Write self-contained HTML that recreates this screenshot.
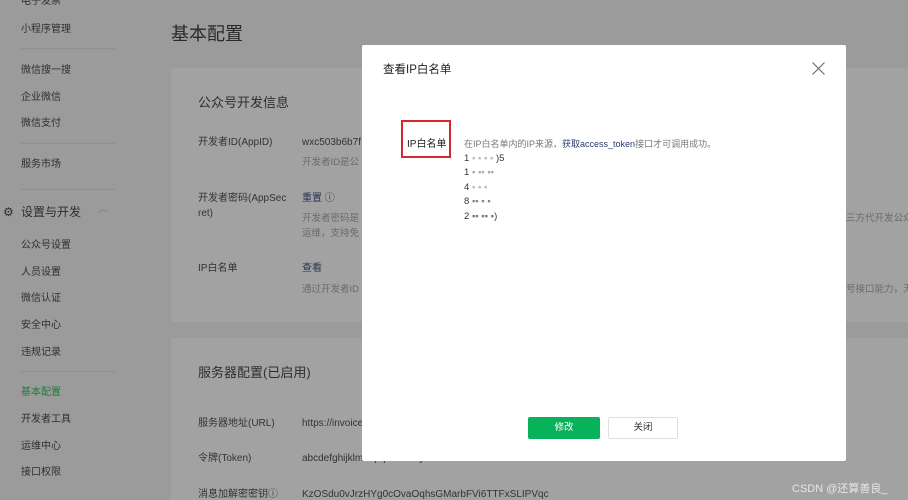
<!DOCTYPE html><html><head><meta charset="utf-8"><style>
html,body{margin:0;width:908px;height:500px;overflow:hidden}
body{background:#9b9b9b;font-family:"Liberation Sans","Noto Sans CJK SC",sans-serif;position:relative;color:#2e2e2e}
.a{position:absolute;white-space:nowrap;line-height:1.2}
.t{margin-top:2px}
.s{font-size:10px;color:#2f2f2f;margin-top:2px}
.line{position:absolute;left:21px;width:94px;height:1px;background:#8f8f8f}
.card{position:absolute;left:171px;width:760px;background:#a2a2a2;border-radius:3px}
.l{font-size:10px;color:#333;margin-top:2px}
.g{font-size:9.5px;color:#6a6a6a;margin-top:2px}
.k{font-size:10px;color:#2a3450;margin-top:2px}
.ip{font-size:9.5px;color:#333;margin-top:1px}
.btn{line-height:22px!important;text-align:center;font-size:9.5px;border-radius:2px}
</style></head><body>
<div class="a s" style="left:21px;top:-6px">电子发票</div>
<div class="a s" style="left:21px;top:22px">小程序管理</div>
<div class="line" style="top:48px"></div>
<div class="a s" style="left:21px;top:63px">微信搜一搜</div>
<div class="a s" style="left:21px;top:90px">企业微信</div>
<div class="a s" style="left:21px;top:116px">微信支付</div>
<div class="line" style="top:143px"></div>
<div class="a s" style="left:21px;top:157px">服务市场</div>
<div class="line" style="top:189px"></div>
<div class="a t" style="left:3px;top:203px;font-size:12px">⚙</div>
<div class="a t" style="left:21px;top:203px;font-size:12px">设置与开发</div>
<div class="a t" style="left:98px;top:202px;font-size:10px;color:#777">︿</div>
<div class="a s" style="left:21px;top:238px">公众号设置</div>
<div class="a s" style="left:21px;top:265px">人员设置</div>
<div class="a s" style="left:21px;top:291px">微信认证</div>
<div class="a s" style="left:21px;top:318px">安全中心</div>
<div class="a s" style="left:21px;top:345px">违规记录</div>
<div class="line" style="top:371px"></div>
<div class="a s" style="left:21px;top:385px;color:#1e7a3e">基本配置</div>
<div class="a s" style="left:21px;top:412px">开发者工具</div>
<div class="a s" style="left:21px;top:439px">运维中心</div>
<div class="a s" style="left:21px;top:465px">接口权限</div>
<div class="a t" style="left:171px;top:22px;font-size:18px;color:#2a2a2a">基本配置</div>
<div class="card" style="top:68px;height:254px"></div>
<div class="card" style="top:338px;height:170px"></div>
<div class="a t" style="left:198px;top:93px;font-size:13px">公众号开发信息</div>
<div class="a l" style="left:198px;top:135px">开发者ID(AppID)</div>
<div class="a l" style="left:302px;top:135px">wxc503b6b7f</div>
<div class="a g" style="left:302px;top:155px">开发者ID是公</div>
<div class="a l" style="left:198px;top:191px">开发者密码(AppSec</div>
<div class="a l" style="left:198px;top:206px">ret)</div>
<div class="a k" style="left:302px;top:191px">重置 ⓘ</div>
<div class="a g" style="left:302px;top:211px">开发者密码是</div>
<div class="a g" style="left:302px;top:226px">运维，支持免</div>
<div class="a l" style="left:198px;top:261px">IP白名单</div>
<div class="a k" style="left:302px;top:261px">查看</div>
<div class="a g" style="left:302px;top:282px">通过开发者ID</div>
<div class="a g" style="left:846px;top:211px">三方代开发公众</div>
<div class="a g" style="left:846px;top:282px">号接口能力，无</div>
<div class="a t" style="left:198px;top:363px;font-size:13px">服务器配置(已启用)</div>
<div class="a l" style="left:198px;top:416px">服务器地址(URL)</div>
<div class="a l" style="left:302px;top:416px">https://invoice</div>
<div class="a l" style="left:198px;top:451px">令牌(Token)</div>
<div class="a l" style="left:302px;top:451px">abcdefghijklmnopqrstuvwxyz</div>
<div class="a l" style="left:198px;top:487px">消息加解密密钥ⓘ</div>
<div class="a l" style="left:302px;top:487px">KzOSdu0vJrzHYg0cOvaOqhsGMarbFVi6TTFxSLIPVqc</div>
<div class="a t" style="left:792px;top:481px;font-size:11px;color:#e6e6e6">CSDN @还算善良_</div>

<div class="a" style="left:362px;top:45px;width:484px;height:416px;background:#fff;border-radius:2px"></div>
<div class="a t" style="left:383px;top:62px;font-size:11.5px;color:#222">查看IP白名单</div>
<svg class="a" style="left:812px;top:62px" width="13" height="13"><path d="M0.5 0.5L12.5 12.5M12.5 0.5L0.5 12.5" stroke="#666" stroke-width="1.1"/></svg>
<div class="a" style="left:401px;top:120px;width:50px;height:38px;border:2px solid #d5282a;box-sizing:border-box"></div>
<div class="a t" style="left:407px;top:137px;font-size:10px;color:#222">IP白名单</div>
<div class="a t" style="left:464px;top:137px;font-size:9px;color:#777">在IP白名单内的IP来源，<span style="color:#2a3a70">获取access_token</span>接口才可调用成功。</div>
<div class="a ip" style="left:464px;top:152px">1 <span style="color:#bbb">▪ ▪ ▪ ▪</span> )5</div>
<div class="a ip" style="left:464px;top:166px">1 <span style="color:#aaa">▪ ▪▪ ▪▪</span></div>
<div class="a ip" style="left:464px;top:181px">4 <span style="color:#bbb">▪ ▪ ▪</span></div>
<div class="a ip" style="left:464px;top:195px">8 <span style="color:#888">▪▪ ▪ ▪</span></div>
<div class="a ip" style="left:464px;top:210px">2 <span style="color:#777">▪▪ ▪▪ ▪</span>)</div>
<div class="a btn" style="left:528px;top:417px;width:72px;height:22px;background:#08b25a;color:#fff">修改</div>
<div class="a btn" style="left:608px;top:417px;width:70px;height:22px;border:1px solid #e0e0e0;box-sizing:border-box;line-height:20px!important;color:#333">关闭</div>
</body></html>
